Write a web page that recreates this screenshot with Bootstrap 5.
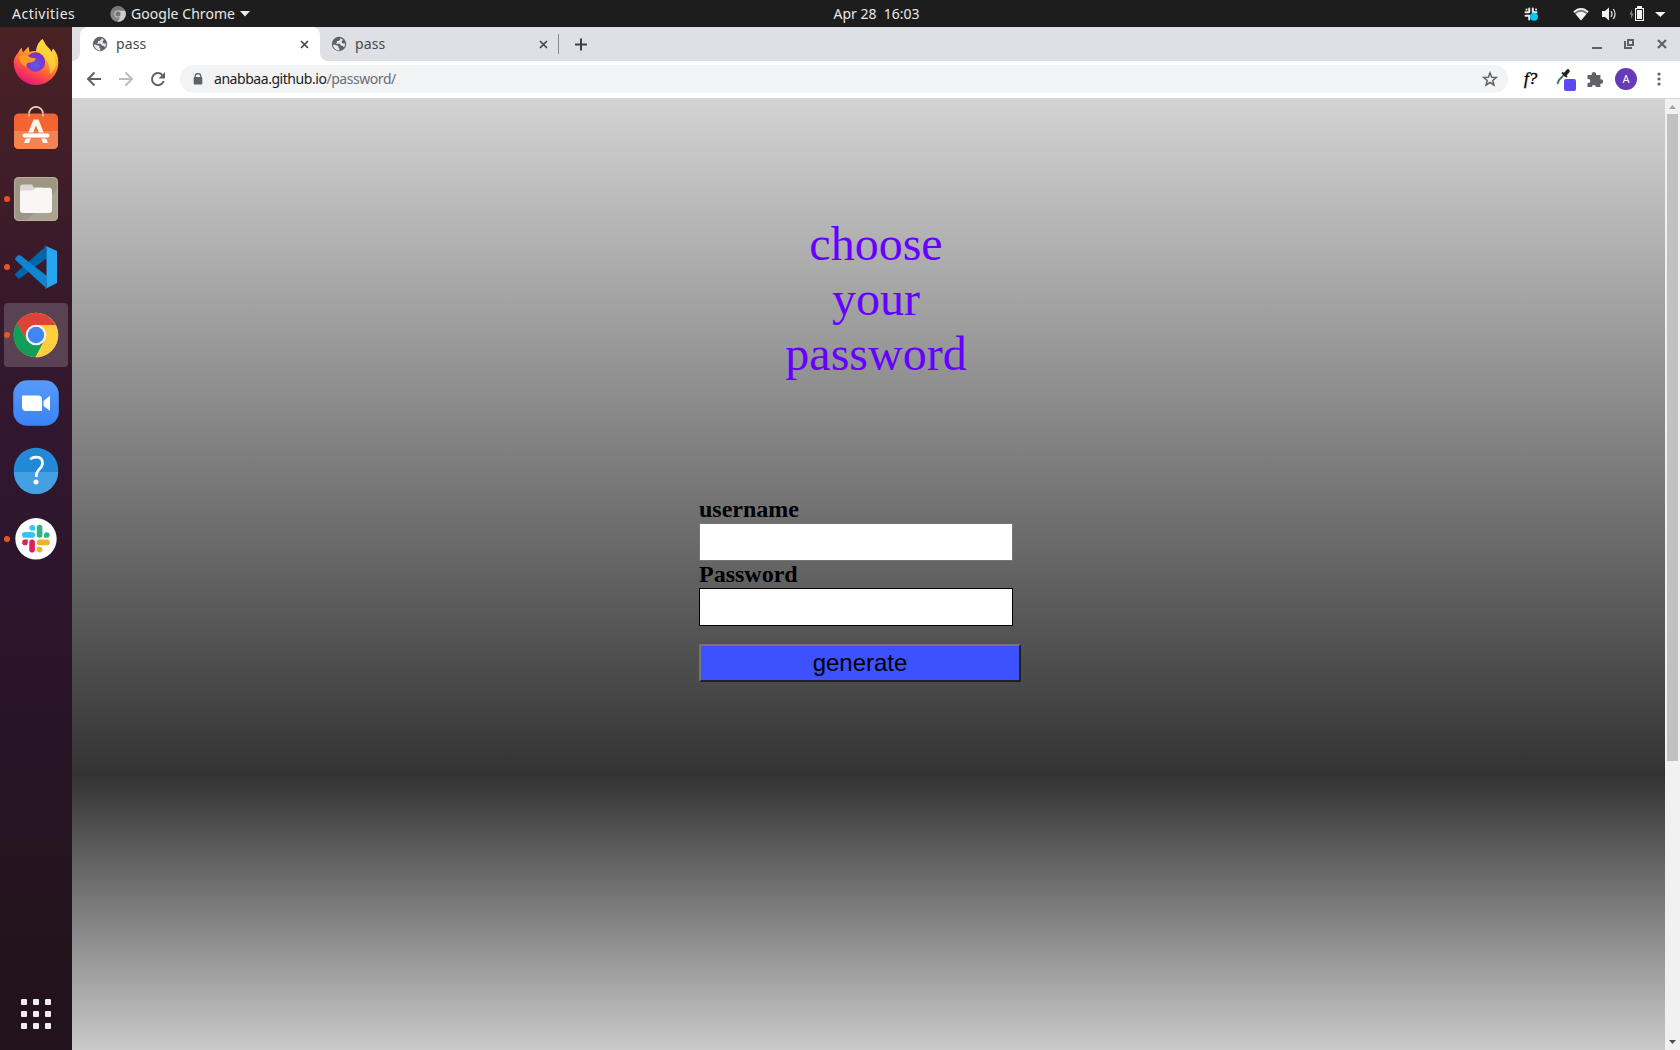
<!DOCTYPE html>
<html lang="en">
<head>
<meta charset="utf-8">
<title>pass</title>
<link href="https://cdn.jsdelivr.net/npm/bootstrap@5.3.0/dist/css/bootstrap.min.css" rel="stylesheet">
<style>
body{height:1050px;overflow:hidden;font-family:"Noto Sans",sans-serif;font-size:14px;line-height:1.2}
svg{display:block;flex:none}
.topbar{height:27px;background:#1d1d1d;color:#e8e8e6;padding:1px 12px 0}
.topbar .side-l{width:456px}
.topbar .side-r{width:383px}
.lbl-act{width:98px;letter-spacing:.5px}
.dock{width:72px;flex:none;background:linear-gradient(#4b2224 0,#3a1a2a 22%,#30172f 42%,#291429 65%,#23141c 90%,#22131c 100%);padding:4px 4px 15px}
.dock-item{height:64px;margin-bottom:4px;border-radius:4px}
.dock-item.current{background:#5b4253}
.nudge{padding-bottom:2px}
.dot-run{left:0;top:29px;width:6px;height:6px;border-radius:50%;background:#e95420}
.tabs-strip{height:34px;background:#dee0e5;color:#45494d}
.lead-edge{width:8px;background:#fff}
.lead-edge div{height:34px;background:#dee0e5;border-bottom-right-radius:8px}
.tab-on{width:240px;background:#fff;border-radius:8px 8px 0 0;padding:0 11px 0 12px}
.tab-after{background:#fff}
.tab-off{width:238px;padding:0 10px 0 11px;background:#dee0e5;border-bottom-left-radius:8px}
.tabname{margin-left:8px;letter-spacing:.15px}
.tab-sep{width:1px;height:20px;background:#85888c}
.toolbar-row{height:38px;background:#fff;border-bottom:1px solid #d5d6db;padding:4px 0 5px 13px}
.omni{width:1328px;flex:none;height:28px;border-radius:14px;background:#f1f3f4;margin-left:13px;padding:0 10px 0 11px;font-size:14px;letter-spacing:-.45px;color:#6b6f73}
.omni b{font-weight:400;color:#202124}
.avatar{width:22px;height:22px;border-radius:50%;background:#673ab7;color:#fff;font-size:11px}
.pagebg{background:linear-gradient(#d3d3d3 0,#333 676px,#cacaca 951px)}
.fq{font:italic 17px/22px "Liberation Serif",serif;color:#000;-webkit-text-stroke:.4px #000;width:18px}
.title-txt{font:48px/55px "Liberation Serif",serif;color:#60f;margin-top:117px;margin-left:15px;width:1578px}
.pw-form{margin-top:115px;margin-left:627px;width:322px}
.pw-form label{display:block;font:bold 24px/27px "Liberation Serif",serif;color:#000}
.pw-form input{display:block;width:314px;height:38px;padding:0;border:1px solid #767676;border-radius:0;background:#fff}
.pw-form input.second{border-color:#000}
.pw-form button{display:block;width:322px;height:38px;margin-top:18px;padding:0;border:2px solid;border-color:#767676 #212121 #212121 #767676;border-radius:0;background:#3d51ff;color:#000;font:24px/30px "Liberation Sans",sans-serif}
.sbar{width:15px;flex:none;background:#f1f1f1}
.sbar .thumb{width:11px;height:647px;background:#c1c1c1}
</style>
</head>
<body class="d-flex flex-column">
<svg width="0" height="0" class="position-absolute">
<defs>
<g id="globe"><circle cx="8" cy="8" r="7.2" fill="#5f6368"/><path d="M1.500 8.300 5 9.200 7.400 10v1.800l1 1v1.600A6 6 0 0 1 2 8.500zM9.300 2.300v1.300L7.600 5H6v1.600L4.600 7.700h4.200l1.400 2.100h1.400l1.600 1.400A6 6 0 0 0 14 7.600h-2.300l-1-1.200V5l1.400-1A6 6 0 0 0 9.300 2.300z" fill="#e7e9ec"/></g>
<path id="xmark" d="M1 1 8 8M8 1 1 8" stroke="#3f4348" stroke-width="1.600"/>
</defs>
</svg>
<header class="topbar d-flex align-items-center justify-content-between">
  <div class="side-l d-flex align-items-center">
    <span class="lbl-act">Activities</span>
    <svg width="16" height="16" viewBox="0 0 16 16"><circle cx="8" cy="8" r="7.700" fill="#858585"/><path d="M8 4.500h7A7.700 7.700 0 0 1 7.500 15.700L11 10z" fill="#ccc"/><path d="M1.500 4A7.700 7.700 0 0 1 15 4.500H8z" fill="#777"/><circle cx="8" cy="8" r="3.500" fill="#ddd"/><circle cx="8" cy="8" r="2.700" fill="#777"/></svg>
    <span style="margin-left:5px;letter-spacing:.05px">Google Chrome</span>
    <svg style="margin-left:5px" width="11" height="6"><path d="M0 0h10L5 5.500z" fill="#eee"/></svg>
  </div>
  <span>Apr 28&nbsp; 16:03</span>
  <div class="side-r d-flex align-items-center justify-content-end">
    <svg width="149" height="20" viewBox="1519 3 149 20">
      <g stroke="#e8e8e8" stroke-width="2" stroke-linecap="round" fill="none"><path d="M1529.200 7.500v3.500M1532.800 7.500v3.500M1525.500 11.300h3M1534 11.300h2.500M1525.500 14.800h4M1529.200 15v3.500M1526.500 8.500h.1M1536 8.500h.1"/></g>
      <circle cx="1534" cy="15.700" r="4" fill="#00c8f5"/>
      <path d="M1573.300 10.400Q1581 3.500 1588.700 10.400L1581 19.500z" fill="#777"/><path d="M1573.300 10.400Q1581 3.500 1588.700 10.400L1587.600 11.700Q1581 6 1574.400 11.700z" fill="#f2f2f2"/><path d="M1575.600 13Q1581 8.500 1586.400 13L1581 19.500z" fill="#f2f2f2"/>
      <path d="M1602 10h3l4-3.500v13L1605 16h-3z" fill="#f2f2f2"/><path d="M1611 10q2 3 0 6M1613.300 8q3.500 5 0 10" stroke="#d8d8d8" stroke-width="1.300" fill="none"/>
      <path d="M1632 8.500 1629.500 13.500h1.700L1631 18l2.500-5.500h-1.700z" fill="#888"/>
      <path d="M1637 5h5v2h2v13h-9V7h2z" fill="#f2f2f2"/><path d="M1636.500 8.500h6v10h-6z" fill="none" stroke="#1d1d1d"/>
      <path d="M1655 11h10.500l-5.200 5z" fill="#f2f2f2"/>
    </svg>
  </div>
</header>
<div class="d-flex flex-grow-1">
  <nav class="dock d-flex flex-column">
    <div class="dock-item nudge d-flex align-items-center justify-content-center">
      <svg width="48" height="48" viewBox="0 0 48 48"><defs><linearGradient id="ff" x1=".8" y1="0" x2=".3" y2="1"><stop offset="0" stop-color="#fff04a"/><stop offset=".35" stop-color="#ffb02e"/><stop offset=".65" stop-color="#ff5a3a"/><stop offset="1" stop-color="#e5107e"/></linearGradient><radialGradient id="fp" cx=".5" cy=".65"><stop offset="0" stop-color="#5b5bf5"/><stop offset="1" stop-color="#8330c4"/></radialGradient></defs>
      <path d="M5.500 15.500 9.500 9.500 11 14.500 16.500 8.500 17.500 14Q21 12.500 24 13 25 5 30.500 1 33 7 38 11.500L39.500 14 41 10.500Q46.500 16 46.300 24.500A22.300 22.300 0 0 1 1.700 25Q1.500 20 5.500 15.500z" fill="url(#ff)"/><path d="M24 13Q25 5 30.500 1 33 7 38 11.500L43 20Q46 30 38 36 38 20 24 13z" fill="#ffd83b" opacity=".75"/><circle cx="23.500" cy="24" r="9.700" fill="url(#fp)"/><path d="M7 18.500Q14 15 18.500 19.500L24 20.500Q23 23.500 18.500 24.500 13.500 24 14.500 29 7 26 7 18.500z" fill="#ff9a22"/></svg></div>
    <div class="dock-item nudge d-flex align-items-center justify-content-center">
      <svg width="48" height="48" viewBox="0 0 48 48"><path d="M17 11V7.500a7 6.700 0 0 1 14 0V11" fill="none" stroke="#edcba5" stroke-width="1.700"/><rect x="2" y="7.500" width="44" height="35.500" rx="4.500" fill="#f26430"/><path d="M2 25h44v13.500a4.500 4.500 0 0 1-4.500 4.500h-35A4.500 4.500 0 0 1 2 38.500z" fill="#f28353"/><path d="M17 10.500V8M31 10.500V8" stroke="#edcba5" stroke-width="1.700"/><path d="M21.500 13.500h5L36 37h-5L24 19.500 17 37h-5z" fill="#fff3eb"/><rect x="10" y="27" width="28" height="5" rx="2.500" fill="#fff" stroke="#ee6d3c" stroke-width=".8"/></svg></div>
    <div class="dock-item d-flex align-items-center justify-content-center position-relative"><span class="dot-run position-absolute"></span>
      <svg width="48" height="48" viewBox="0 0 48 48"><rect x="2" y="2" width="44" height="44" rx="4.500" fill="#9e9684"/><path d="M46 14 14 46h27.500a4.500 4.500 0 0 0 4.500-4.500z" fill="#aaa391"/><rect x="2.500" y="2.500" width="43" height="43" rx="4.500" fill="none" stroke="#b7b0a2"/><path d="M8 20V12q0-2.500 2.500-2.500h8.500q2 0 2.500 3H30v8z" fill="#dcd9d1"/><path d="M8 17q0-1.500 3-1.500h8.500q2 0 3.500-2 .5-.8 2.500-.8H37q3 0 3 3V35q0 3-3 3H11q-3 0-3-3z" fill="#f8f7f5"/></svg></div>
    <div class="dock-item d-flex align-items-center justify-content-center position-relative"><span class="dot-run position-absolute"></span>
      <svg width="48" height="48" viewBox="0 0 48 48"><path d="M34 3 3.500 30.500q-1 1 0 2L6 35q1 1 2.500 0L35 15z" fill="#0065a9"/><path d="M34 45 3.500 17q-1-1 0-2L6 12.500q1-1 2.500 0L35 33z" fill="#1085d1"/><path d="M34 3 45 8v32L34 45.500q-1 .3-2-.7 2.500 1.200 2.500-1.500V5q0-3-2.500-1.500 1-1 2-.5z" fill="#27a5f1"/></svg></div>
    <div class="dock-item current d-flex align-items-center justify-content-center position-relative"><span class="dot-run position-absolute"></span>
      <svg width="48" height="48" viewBox="0 0 48 48"><circle cx="24" cy="24" r="22.300" fill="#ffcd40"/><path d="M4.500 12.800A22.300 22.300 0 0 1 43.700 14H24L14.800 29z" fill="#db4437"/><path d="M4.700 12.500 15 29.500 32.300 29.500 23.500 46.300A22.300 22.300 0 0 1 4.700 12.500z" fill="#129d59"/><path d="M24 24 32.800 29 23.500 46.300A22.300 22.300 0 0 0 43.700 14H24z" fill="#ffcd40"/><circle cx="24" cy="24" r="10.300" fill="#f4f4f4"/><circle cx="24" cy="24" r="8.200" fill="#4285f4"/></svg></div>
    <div class="dock-item d-flex align-items-center justify-content-center">
      <svg width="48" height="48" viewBox="0 0 48 48"><defs><linearGradient id="zm" x2="0" y2="1"><stop stop-color="#559bfa"/><stop offset="1" stop-color="#3b82f6"/></linearGradient></defs><rect x="1.300" y="1.300" width="45.500" height="45.500" rx="14" fill="url(#zm)"/><path d="M10 16.500h16q4 0 4 4V32H14q-4 0-4-4zM31.500 22 38 16.700v15L31.500 27z" fill="#fff"/></svg></div>
    <div class="dock-item nudge d-flex align-items-center justify-content-center">
      <svg width="48" height="48" viewBox="0 0 48 48"><circle cx="24" cy="24" r="22.200" fill="#2189d6"/><path d="M1.800 26A22.200 22.200 0 0 0 46.200 26z" fill="#43a1e3"/><path d="M18.300 13.200Q21 11 24.500 11.200 30.500 11.500 30.500 17 30.500 20.500 27 23.500 24.200 26 24.200 31" fill="none" stroke="#fff" stroke-width="2.700"/><circle cx="24" cy="36" r="2.500" fill="#fff"/></svg></div>
    <div class="dock-item nudge d-flex align-items-center justify-content-center position-relative"><span class="dot-run position-absolute"></span>
      <svg width="48" height="48" viewBox="0 0 48 48"><circle cx="24" cy="24.800" r="20.700" fill="#fff"/><g transform="translate(0,.8)"><g fill="#36c5f0"><rect x="10" y="17.300" width="13" height="5.600" rx="2.800"/><path d="M23 15.800h-2.800a2.800 2.800 0 1 1 2.800-2.800z"/></g><g fill="#2eb67d"><rect x="24.800" y="10" width="5.600" height="13" rx="2.800"/><path d="M32 23v-2.800a2.800 2.800 0 1 1 2.800 2.800z"/></g><g fill="#ecb22e"><rect x="24.800" y="24.800" width="13" height="5.600" rx="2.800"/><path d="M24.800 32h2.800a2.800 2.800 0 1 1-2.800 2.800z"/></g><g fill="#e01e5a"><rect x="17.300" y="24.800" width="5.600" height="13" rx="2.800"/><path d="M15.800 24.800v2.800a2.800 2.800 0 1 1-2.800-2.800z"/></g></g></svg></div>
    <div class="mt-auto d-flex justify-content-center">
      <svg width="32" height="38" viewBox="0 0 32 38" fill="#eeeeec"><g id="r3"><rect x="1" y="2" width="6" height="6" rx="1"/><rect x="13" y="2" width="6" height="6" rx="1"/><rect x="25" y="2" width="6" height="6" rx="1"/></g><use href="#r3" y="12"/><use href="#r3" y="24"/></svg></div>
  </nav>
  <main class="flex-grow-1 d-flex flex-column">
    <div class="tabs-strip d-flex">
      <div class="lead-edge"><div></div></div>
      <div class="tab-on d-flex align-items-center"><svg width="16" height="16"><use href="#globe"/></svg><span class="tabname">pass</span><svg class="ms-auto" width="9" height="9"><use href="#xmark"/></svg></div>
      <div class="tab-after"><div class="tab-off h-100 d-flex align-items-center"><svg width="16" height="16"><use href="#globe"/></svg><span class="tabname">pass</span><svg class="ms-auto" width="9" height="9"><use href="#xmark"/></svg></div></div>
      <div class="d-flex align-items-center flex-grow-1">
        <div class="tab-sep"></div>
        <svg style="margin-left:16px" width="13" height="13"><path d="M6 .5v12M0 6.500h12" stroke="#3c4043" stroke-width="2"/></svg>
        <svg class="ms-auto" width="88" height="20" viewBox="1592 34 88 20" fill="none" stroke="#5f6368" stroke-width="2"><path d="M1592 48h10M1628 40h5v5h-5zM1625 41v7h7"/><path d="M1658 40l8 8M1666 40l-8 8" stroke-width="2.200"/></svg>
      </div>
    </div>
    <div class="toolbar-row d-flex align-items-center">
      <svg width="82" height="20" viewBox="85 69 82 20" fill="none" stroke-width="2"><path d="M101 79H88.500M94.500 72.500 88 79l6.500 6.500" stroke="#5f6368"/><path d="M119 79h12.500M125.500 72.500 132 79l-6.500 6.500" stroke="#babcbe"/><path d="M162.800 75.500A6 6 0 1 0 163.700 81" stroke="#5f6368"/><path d="M165 72v6.500h-6.500z" fill="#5f6368"/></svg>
      <div class="omni d-flex align-items-center">
        <svg style="margin-left:2px" width="10" height="12"><path d="M2.200 5V3.300a2.800 2.800 0 0 1 5.600 0V5" fill="none" stroke="#5f6368" stroke-width="1.300"/><rect x=".7" y="4" width="8.600" height="7.500" rx="1" fill="#5f6368"/></svg>
        <span style="margin-left:11px"><b>anabbaa.github.io</b>/password/</span>
        <svg class="ms-auto" width="16" height="16"><path d="M8 1.800 9.700 6.200 14.300 6.500 10.800 9.400 12 14 8 11.500 4 14 5.200 9.400 1.700 6.500 6.300 6.200z" fill="none" stroke="#5f6368" stroke-width="1.500"/></svg>
      </div>
      <div class="d-flex align-items-center" style="margin-left:16px">
        <span class="fq">f?</span>
        <svg style="margin-left:13px" width="22" height="24" viewBox="1555 69 22 24"><path d="M1557.500 85.500 1559 82 1565 75.500" stroke="#8a9a90" stroke-width="2.200" fill="none"/><path d="M1557.500 86l1.500-4 4-4" stroke="#20803f" stroke-width="1.200" fill="none"/><path d="M1562 74.500l5 4.500M1564.500 76.500 1568 73" stroke="#202020" stroke-width="1.800"/><path d="M1565 76.500 1568 73" stroke="#202020" stroke-width="3.600" stroke-linecap="round"/><rect x="1564" y="81" width="12" height="12" rx="2" fill="#5b49f2"/></svg>
        <svg style="margin-left:9px" width="17" height="17" viewBox="1586 70 17 17"><path d="M1587.500 74h4.200a2.300 2.300 0 1 1 4.400 0h4.300v4.300a2.300 2.300 0 1 1 0 4.400V86h-4.500a2 2 0 1 0-4 0h-4.400v-4a2.100 2.100 0 1 0 0-4z" fill="#5f6368"/></svg>
        <span class="avatar d-flex align-items-center justify-content-center" style="margin-left:12px">A</span>
        <svg style="margin-left:20px" width="4" height="14" fill="#5f6368"><circle cx="2" cy="2" r="1.600"/><circle cx="2" cy="7" r="1.600"/><circle cx="2" cy="12" r="1.600"/></svg>
      </div>
    </div>
    <div class="d-flex flex-grow-1">
      <section class="pagebg flex-grow-1">
        <div class="title-txt text-center">choose<br>your<br>password</div>
        <form class="pw-form">
          <label for="u">username</label>
          <input id="u" type="text">
          <label for="p">Password</label>
          <input id="p" class="second" type="text">
          <button type="button">generate</button>
        </form>
      </section>
      <aside class="sbar d-flex flex-column align-items-center">
        <svg width="15" height="15"><path d="M4 10h7L7.500 6z" fill="#a3a3a3"/></svg>
        <div class="thumb"></div>
        <svg class="mt-auto" width="15" height="15"><path d="M4 5h7L7.500 9z" fill="#505050"/></svg>
      </aside>
    </div>
  </main>
</div>
<script src="https://cdn.jsdelivr.net/npm/bootstrap@5.3.0/dist/js/bootstrap.bundle.min.js"></script>
</body>
</html>
